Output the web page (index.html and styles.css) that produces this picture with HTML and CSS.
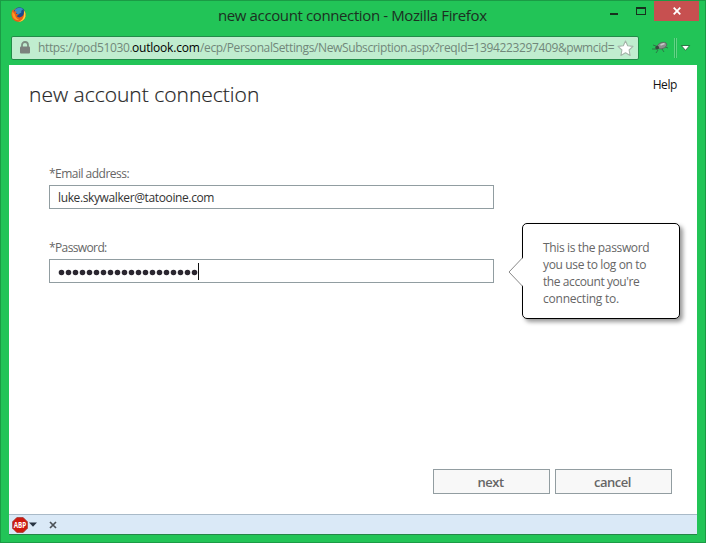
FILE: index.html
```html
<!DOCTYPE html>
<html lang="en">
<head>
<meta charset="utf-8">
<title>new account connection</title>
<link rel="stylesheet" href="styles.css">
</head>
<body>
<div class="window">
  <header class="titlebar">
    <svg class="firefox" width="16" height="16" viewBox="0 0 16 16">
      <circle cx="7.6" cy="7.7" r="6.9" fill="#e8641b"/>
      <circle cx="8.4" cy="6" r="5.7" fill="#1b4b8c"/>
      <path d="M4 2.5Q8-.6 12.3 2.2 9.5 3.2 10.4 5.6L7 7.4 4 5z" fill="#398dc5"/>
      <path d="M1.2 3Q2.2 3.4 3 4.3L5.5 4.6 4.8 6.7 8 7.5 5.6 9Q7.6 11.5 11 9.6 13.6 7.4 12.9 3 15.3 6 14.4 9.7 12.6 15 7.3 14.8 1.6 14.4.7 8.8.3 5.5 1.2 3z" fill="#e95c18"/>
      <path d="M12.9 3Q15.3 6 14.4 9.7 12.6 14.8 7.3 14.8 12.6 13 13 8z" fill="#ffd23a"/>
      <path d="M1.5 4.5Q.5 8.5 3 11.6 5.5 13.6 8.5 13 4.5 11.7 3.7 7z" fill="#f99a24"/>
    </svg>
    <h1 class="window-title">new account connection - Mozilla Firefox</h1>
    <div class="controls">
      <span class="minimize"></span>
      <span class="maximize"></span>
      <span class="close"><svg width="8" height="8" viewBox="0 0 8 8"><path d="M.7.7l6.6 6.6M7.3.7L.7 7.3" stroke="#fff" stroke-width="1.8"/></svg></span>
    </div>
  </header>
  <div class="navbar">
    <div class="address">
      <svg class="lock" width="10" height="13" viewBox="0 0 10 13"><path d="M2 6V4a3 3 0 0 1 6 0v2" fill="none" stroke="#7c8d80" stroke-width="1.8"/><rect y="5.5" width="10" height="7" rx="1" fill="#7c817d"/></svg>
      <div class="url"><span class="u1">https://pod51030.</span><span class="u2">outlook.com</span><span class="u3">/ecp/PersonalSettings/NewSubscription.aspx?reqId=1394223297409&amp;pwmcid=</span></div>
      <svg class="star" width="17" height="17" viewBox="0 0 17 17"><path d="M8.5 1l2.2 4.8 5.3.6-3.9 3.6 1 5.5-4.6-2.7-4.6 2.7 1-5.5L1 6.4l5.3-.6z" fill="#fff" stroke="#a4b5a9" stroke-width="1.1" stroke-linejoin="round"/></svg>
    </div>
    <svg class="bug" width="17" height="13" viewBox="0 0 17 13"><path d="M1 4l3 1 4 2M0 8h5l3-1M4 12l2-3M13 6l3 1M10 8l2 3" fill="none" stroke="#315840" stroke-width=".7"/><ellipse cx="10" cy="4.6" rx="5" ry="3" transform="rotate(-20 10 4.6)" fill="#8b8f8d" stroke="#59675e" stroke-width=".8"/><path d="M8.5 4l4-1.5" stroke="#c9cbca" stroke-width="1.4"/><circle cx="5.2" cy="6.6" r="1.9" fill="#37493e"/></svg>
    <span class="divider"></span>
    <svg class="arrow" width="11" height="8" viewBox="0 0 11 8"><path d="M1.3 1.5h8.4L5.5 6.4z" fill="#fff" stroke="#155e2e" stroke-width=".8"/></svg>
  </div>
  <main class="page">
    <div class="page-head">
      <h2><span>new account connection</span></h2>
      <a class="help">Help</a>
    </div>
    <div class="form">
      <div class="fields">
        <div class="label">*Email address:</div>
        <div class="input"><span class="email">luke.skywalker@tatooine.com</span></div>
        <div class="label second">*Password:</div>
        <div class="input password"><svg width="141" height="17" viewBox="0 0 141 17"><path d="M3.5 9.5h134" stroke="#2b2730" stroke-width="5.6" stroke-linecap="round" stroke-dasharray="0 7"/><path d="M140.5 0v17" stroke="#111"/></svg></div>
      </div>
      <aside class="tip">
        <svg class="pointer" width="15" height="30" viewBox="0 0 15 30"><path d="M15 .8v28.4L1 15z" fill="#fff"/><path d="M14.5.8L1 15l13.5 14.2" fill="none" stroke="#888"/></svg>
        <span>This is the password</span><br><span>you use to log on to</span><br><span class="t3">the account you're</span><br><span class="t4">connecting to.</span>
      </aside>
    </div>
    <div class="actions">
      <div class="button"><span>next</span></div>
      <div class="button"><span>cancel</span></div>
    </div>
  </main>
  <footer class="statusbar">
    <svg width="16" height="16" viewBox="0 0 16 16"><path d="M4.8.6h6.4l4.2 4.2v6.4l-4.2 4.2H4.8L.6 11.2V4.8z" fill="#d01a10" stroke="#a03a34" stroke-width=".8"/><text class="abp" x="8" y="10.9" text-anchor="middle" textLength="12.5" lengthAdjust="spacingAndGlyphs">ABP</text></svg>
    <svg class="drop" width="8" height="5" viewBox="0 0 8 5"><path d="M0 .5h8L4 4.8z" fill="#273342"/></svg>
    <svg class="dismiss" width="8" height="8" viewBox="0 0 8 8"><path d="M1 1l6 6M7 1L1 7" stroke="#4b5157" stroke-width="1.7"/></svg>
  </footer>
</div>
</body>
</html>
```
FILE: styles.css
```css
* { box-sizing: border-box; }
body { margin: 0; font-family: "Open Sans", "Noto Sans", sans-serif; font-size: 12px; }
svg { display: block; flex: none; }
.window { width: 706px; height: 543px; background: #22c457; border: 1px solid #1b9b45; padding: 0 8px; white-space: nowrap; display: flex; flex-direction: column; }
.titlebar { height: 35px; display: flex; align-items: flex-start; position: relative; }
.firefox { margin: 6px 0 0 2px; }
.window-title { margin: 2px 0 0 191px; width: 300px; font-size: 15px; line-height: 24px; font-weight: 400; color: #1c3022; letter-spacing: -.38px; }
.controls { position: absolute; right: -2px; top: 0; display: flex; align-items: flex-start; }
.minimize { width: 8px; height: 2px; margin-top: 12px; background: #17301e; }
.maximize { width: 10px; height: 8px; margin: 6px 8px 0 18px; border: 1px solid #17301e; border-top-width: 2px; }
.close { width: 45px; height: 20px; background: #c75050; display: flex; align-items: center; justify-content: center; }
.navbar { height: 29px; padding-left: 2px; display: flex; align-items: flex-start; }
.address { width: 628px; height: 24px; border: 1px solid #218c48; border-radius: 2px; background: #c0edcf; display: flex; align-items: center; }
.lock { margin-left: 8px; margin-top: -1px; }
.url { width: 579px; margin-left: 8px; color: #71877a; line-height: 20px; display: flex; }
.u1 { width: 94px; letter-spacing: -.35px; }
.u2 { width: 68px; letter-spacing: -.2px; color: #000; }
.u3 { letter-spacing: -.38px; }
.bug { margin: 5px 0 0 13px; }
.divider { width: 3px; height: 20px; margin: 2px 0 0 5px; border: solid #62d486; border-width: 0 1px; background: #1fb14f; }
.arrow { margin: 8px 0 0 3px; }
.page { height: 449px; background: #fff; width: 688px; display: flex; flex-direction: column; }
.page-head { display: flex; justify-content: space-between; padding: 10px 20px 0; }
h2 { margin: 4px 0 0; font-size: 21px; line-height: 30px; font-weight: 300; color: #222; -webkit-text-stroke: .2px #333; }
.help { color: #111; line-height: 20px; letter-spacing: -.4px; }
.form { display: flex; padding-left: 40px; margin-top: 56px; height: 164px; }
.fields { width: 445px; }
.label { line-height: 18px; color: #666; height: 20px; letter-spacing: -.52px; }
.label.second { margin-top: 30px; letter-spacing: -.62px; }
.input { height: 24px; border: 1px solid #919da1; padding-left: 8px; line-height: 23px; color: #333; background: #fff; }
.email { letter-spacing: -.38px; }
.password { padding: 3px 0 0 8px; }
.tip { position: relative; width: 158px; height: 96px; margin: 58px 0 0 28px; border: 1px solid #000; border-radius: 5px; box-shadow: 3px 3px 4px #999; padding: 15px 20px; line-height: 17px; letter-spacing: -.36px; color: #666; background: #fff; }
.t3 { letter-spacing: -.42px; }
.t4 { letter-spacing: -.22px; }
.pointer { position: absolute; left: -15px; top: 33px; }
.actions { margin-top: auto; padding: 0 25px 20px 0; display: flex; justify-content: flex-end; gap: 5px; }
.button { width: 117px; height: 25px; border: 1px solid #929da1; background: #f8f8f8; color: #666; font-weight: 600; font-size: 13px; letter-spacing: -.5px; padding-right: 2px; text-align: center; line-height: 24px; }
.statusbar { width: 688px; height: 21px; background: #dae9f7; border-top: 1px solid #a9bac8; border-bottom: 1px solid #248546; display: flex; align-items: center; padding-left: 3px; }
.abp { font: bold 8px "Open Sans", sans-serif; fill: #fff; }
.drop { margin-left: 1px; }
.dismiss { margin-left: 12px; }
```
